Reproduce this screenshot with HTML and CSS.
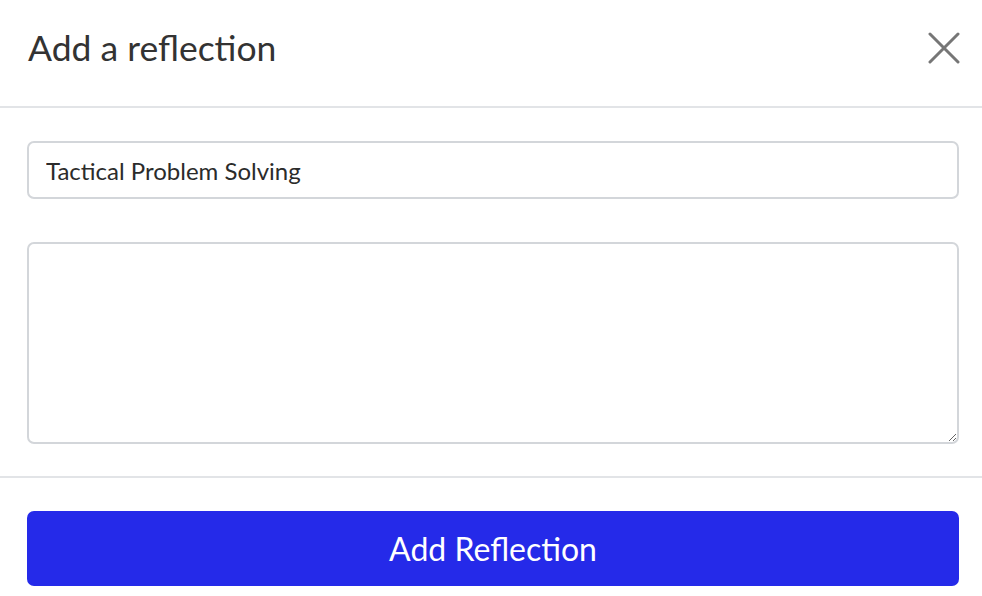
FILE: index.html
```html
<!DOCTYPE html>
<html lang="en">
<head>
<meta charset="utf-8">
<title>Add a reflection</title>
<link rel="stylesheet" href="styles.css">
</head>
<body>
<div class="modal">
  <header class="modal-header">
    <h1 class="modal-title">Add a reflection</h1>
    <button class="close" aria-label="Close">
      <svg width="32" height="32" viewBox="0 0 32 32"><path d="M2 2 L30 30 M30 2 L2 30" stroke="#767676" stroke-width="3" stroke-linecap="round" fill="none"/></svg>
    </button>
  </header>
  <section class="modal-body">
    <input class="field" type="text" value="Tactical Problem Solving">
    <textarea class="area"></textarea>
  </section>
  <footer class="modal-footer">
    <button class="primary">Add Reflection</button>
  </footer>
</div>
</body>
</html>
```
FILE: styles.css
```css
* { box-sizing: border-box; }
html, body { margin: 0; padding: 0; background: #fff; }
body { font-family: Lato, "Open Sans", sans-serif; color: #333; }
.modal { width: 982px; }
.modal-header {
  height: 108px;
  padding: 0 22px 0 28px;
  display: flex;
  align-items: center;
  justify-content: space-between;
  border-bottom: 2px solid #e2e4e7;
}
.modal-title {
  margin: 0;
  font-size: 35.5px;
  font-weight: 400;
  color: #333;
  padding-bottom: 12px;
}
.close {
  background: none;
  border: 0;
  padding: 0;
  width: 32px;
  height: 32px;
  margin-bottom: 10px;
  cursor: pointer;
}
.close svg { display: block; }
.modal-body {
  padding: 33px 23px 32px 27px;
  display: flex;
  flex-direction: column;
  gap: 43px;
  border-bottom: 2px solid #e2e4e7;
}
.field {
  height: 58px;
  width: 100%;
  border: 2px solid #d3d6da;
  border-radius: 7px;
  padding: 0 17px;
  font-family: Lato, sans-serif;
  font-size: 24px;
  color: #2b2b2b;
  outline: none;
}
.area {
  display: block;
  width: 100%;
  height: 202px;
  border: 2px solid #d3d6da;
  border-radius: 7px;
  padding: 12px 17px;
  font-family: Lato, sans-serif;
  font-size: 24px;
  resize: vertical;
  outline: none;
}
.modal-footer {
  padding: 33px 23px 11px 27px;
}
.primary {
  display: block;
  width: 100%;
  height: 75px;
  border: 0;
  border-radius: 7px;
  background: #252ae9;
  color: #fff;
  font-family: Lato, sans-serif;
  font-size: 32px;
  font-weight: 400;
  cursor: pointer;
}
```
